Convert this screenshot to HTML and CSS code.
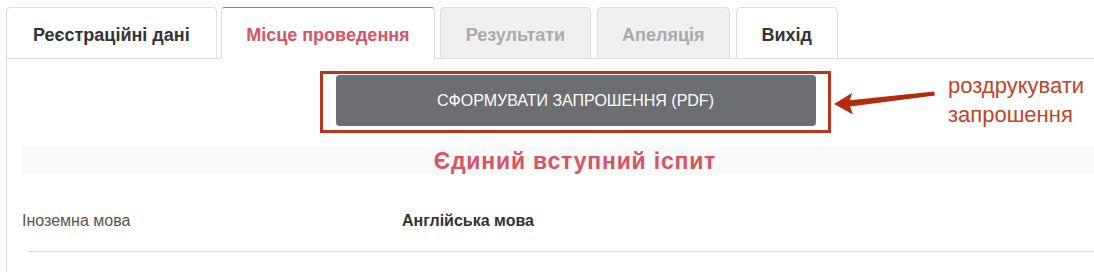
FILE: index.html
```html
<!DOCTYPE html>
<html lang="uk">
<head>
<meta charset="utf-8">
<title>Місце проведення</title>
<link rel="stylesheet" href="styles.css">
</head>
<body>
<div class="page">
  <ul class="tabs">
    <li class="tab first">Реєстраційні дані</li>
    <li class="tab active">Місце проведення</li>
    <li class="tab disabled">Результати</li>
    <li class="tab disabled">Апеляція</li>
    <li class="tab">Вихід</li>
  </ul>
  <div class="panel">
    <div class="actions">
      <div class="highlight">
        <button class="btn" type="button">СФОРМУВАТИ ЗАПРОШЕННЯ (PDF)</button>
      </div>
    </div>
    <h2 class="exam-title">Єдиний вступний іспит</h2>
    <div class="field">
      <div class="field-label">Іноземна мова</div>
      <div class="field-value">Англійська мова</div>
    </div>
    <div class="divider"></div>
  </div>
  <div class="annotation">
    <svg class="arrow" width="110" height="33" viewBox="0 0 110 33">
      <polygon points="4,19 22,8 20,15.2 104,6.5 105,10.5 20,21.5 23,29.5" fill="#b5290d"/>
    </svg>
    <div class="note">роздрукувати<br>запрошення</div>
  </div>
</div>
</body>
</html>
```

FILE: styles.css
```css
html, body {
  margin: 0;
  padding: 0;
  background: #ffffff;
  overflow: hidden;
}

body {
  font-family: "Liberation Sans", Arial, sans-serif;
  color: #333333;
}

.page {
  position: relative;
  width: 1150px;
  padding: 7px 0 0 6px;
}

.tabs {
  display: flex;
  list-style: none;
  margin: 0;
  padding: 0;
  border-bottom: 1px solid #dddddd;
}

.tab {
  margin: 0 6px -1px 0;
  padding: 4px 24.5px 0;
  line-height: 46px;
  font-size: 18px;
  font-weight: bold;
  color: #333333;
  background: #ffffff;
  border: 1px solid #dddddd;
  border-radius: 4px 4px 0 0;
  white-space: nowrap;
}

.tab.first {
  padding: 4px 26px 0;
  margin-right: 4px;
}

.tab.active {
  color: #d65465;
  border-top-color: #c4676a;
  border-bottom-color: #ffffff;
  margin-right: 5px;
}

.tab.disabled {
  color: #aaaaaa;
  background: #f0f0f0;
}

.panel {
  width: 1106px;
  border-left: 1px solid #dddddd;
  padding: 12px 0 30px 15px;
}

.actions {
  display: flex;
  justify-content: center;
}

.highlight {
  border: 3px solid #b8341b;
  padding: 1px 12px 4px 13px;
}

.btn {
  display: block;
  width: 480px;
  height: 51px;
  border: none;
  border-radius: 4px;
  background: #6d6e71;
  color: #ffffff;
  font-family: "Liberation Sans", Arial, sans-serif;
  font-size: 16px;
  padding: 0;
}

.exam-title {
  margin: 14px 0 0;
  height: 26px;
  padding-top: 1px;
  line-height: 26px;
  background: #f9f9f9;
  text-align: center;
  font-size: 23px;
  letter-spacing: 0.8px;
  font-weight: bold;
  color: #d65465;
}

.field {
  display: grid;
  grid-template-columns: 380px 1fr;
  margin-top: 36px;
  font-size: 16px;
  line-height: 22px;
}

.field-label {
  color: #555555;
}

.field-value {
  font-weight: bold;
  color: #333333;
}

.divider {
  margin: 19px 0 0 6px;
  border-top: 1px solid #dddddd;
}

.annotation {
  position: absolute;
  left: 830px;
  top: 71px;
  display: flex;
  align-items: flex-start;
}

.arrow {
  margin-top: 14px;
  margin-right: 8px;
}

.note {
  font-size: 22px;
  line-height: 29px;
  color: #c0432a;
}
```
